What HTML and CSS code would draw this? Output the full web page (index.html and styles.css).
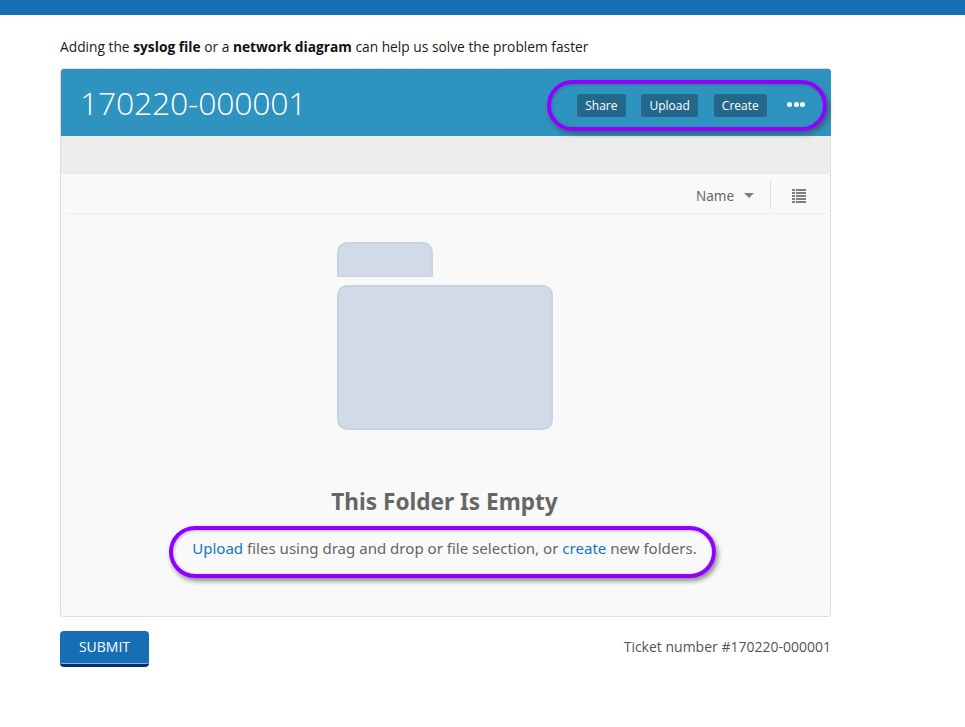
FILE: index.html
```html
<!DOCTYPE html>
<html lang="en">
<head>
<meta charset="utf-8">
<title>Ticket 170220-000001</title>
<link rel="stylesheet" href="styles.css">
</head>
<body>
<div class="topbar"></div>
<main class="content">
  <p class="intro">Adding the <b>syslog file</b> or a <b>network diagram</b> can help us solve the problem faster</p>
  <section class="card">
    <header class="card-head">
      <h1 class="title">170220-000001</h1>
      <div class="actions">
        <span class="btn">Share</span>
        <span class="btn">Upload</span>
        <span class="btn">Create</span>
        <span class="dots"><i></i><i></i><i></i></span>
      </div>
      <div class="ring ring-actions"></div>
    </header>
    <div class="band"></div>
    <div class="sortbar">
      <span class="sort-name">Name</span>
      <span class="caret"></span>
      <span class="divider"></span>
      <svg class="list-icon" width="14" height="14" viewBox="0 0 14 14" aria-hidden="true">
        <path d="M0 0h3v2H0zM4 0h10v2H4zM0 3h3v2H0zM4 3h10v2H4zM0 6h3v2H0zM4 6h10v2H4zM0 9h3v2H0zM4 9h10v2H4zM0 12h3v2H0zM4 12h10v2H4z" fill="#7d7d7d"/>
      </svg>
    </div>
    <div class="empty">
      <div class="folder-tab"></div>
      <div class="folder-body"></div>
      <h2 class="empty-title">This Folder Is Empty</h2>
      <p class="empty-text"><a href="#">Upload</a> files using drag and drop or file selection, or <a href="#">create</a> new folders.</p>
      <div class="ring ring-text"></div>
    </div>
  </section>
  <footer class="foot">
    <button class="submit" type="button">SUBMIT</button>
    <span class="ticket">Ticket number #170220-000001</span>
  </footer>
</main>
</body>
</html>
```
FILE: styles.css
```css
* { box-sizing: border-box; }
html, body { margin: 0; padding: 0; background: #fff; }
body { font-family: "Open Sans", "Noto Sans", sans-serif; color: #222; height: 727px; overflow: hidden; }
.topbar { height: 15px; background: #166eb5; }
.content { width: 771px; margin-left: 60px; }
.intro { margin: 0; padding-top: 22px; height: 53px; font-size: 13.78px; line-height: 20px; color: #1a1a1a; }
.intro b { font-weight: 700; color: #111; }
.card { width: 771px; height: 549px; border: 1px dotted #c4c4c4; border-radius: 4px; background: #f9f9f9; display: flex; flex-direction: column; }
.card-head { position: relative; height: 67px; flex: none; background: #2f93c0; border-radius: 3px 3px 0 0; display: flex; align-items: center; justify-content: space-between; padding: 0 26px 0 19px; margin: 0 -1px 0 0; }
.title { margin: 0; font-weight: 300; font-size: 32px; line-height: 70px; color: #fff; letter-spacing: -0.25px; }
.actions { display: flex; align-items: center; padding-top: 5px; }
.btn { height: 23px; line-height: 24px; padding: 0 8.25px; margin-left: 15.5px; background: #23688a; color: #fff; border-radius: 2px; font-size: 12px; }
.dots { display: flex; gap: 1.5px; margin-left: 20px; margin-top: -2px; }
.dots i { display: block; width: 5px; height: 5px; border-radius: 50%; background: #fff; }
.ring { position: absolute; border: 4px solid #9100ff; box-shadow: 2px 3px 5px rgba(60, 60, 60, 0.6), inset 1px 1px 3px rgba(60, 60, 60, 0.35); pointer-events: none; }
.ring-actions { left: 486px; top: 11px; width: 280px; height: 51px; border-radius: 26px; }
.band { height: 38px; flex: none; background: #ececec; }
.sortbar { height: 40px; flex: none; margin: 0 4px; border-bottom: 1px solid #eeeeee; display: flex; align-items: center; justify-content: flex-end; padding-right: 20px; }
.sort-name { font-family: "Noto Sans", "Open Sans", sans-serif; font-size: 13.5px; color: #666; margin-top: 4px; }
.caret { width: 0; height: 0; border-left: 5px solid transparent; border-right: 5px solid transparent; border-top: 5px solid #7f7f7f; margin: 4px 0 0 10px; }
.divider { width: 1px; height: 28px; background: #dbe0e6; margin: 2px 0 0 16px; }
.list-icon { margin: 4px 0 0 21px; }
.empty { position: relative; flex: 1; display: flex; flex-direction: column; align-items: center; padding: 28px 2px 0 0; }
.folder-tab { width: 96px; height: 35px; margin-right: 120px; background: #d0dbe7; border: 2px solid #c6d3e0; border-bottom-width: 1px; border-radius: 10px 10px 0 0; }
.folder-body { width: 216px; height: 145px; margin-top: 8px; background: #d0dbe7; border: 2px solid #c6d3e0; border-radius: 10px; }
.empty-title { margin: 57px 0 0; font-family: "Noto Sans", "Open Sans", sans-serif; font-weight: 700; font-size: 22.6px; line-height: 30px; color: #666; }
.empty-text { margin: 19px 0 0; font-family: "Noto Sans", "Open Sans", sans-serif; font-size: 15.05px; line-height: 24px; color: #666; }
.empty-text a { color: #1078c0; text-decoration: none; }
.ring-text { left: 108px; top: 312px; width: 547px; height: 52px; border-radius: 27px; }
.foot { display: flex; justify-content: space-between; align-items: flex-start; margin-top: 14px; }
.submit { width: 89px; height: 36px; padding: 0 0 3px; border: 0; border-bottom: 3px solid #0b2e6b; border-radius: 4px; background: #166eb5; color: #fff; font-family: "Open Sans", sans-serif; font-size: 14px; box-shadow: inset 0 -1px 0 #7db2dd; }
.ticket { font-size: 14px; line-height: 20px; color: #555; margin-top: 6px; }
```
